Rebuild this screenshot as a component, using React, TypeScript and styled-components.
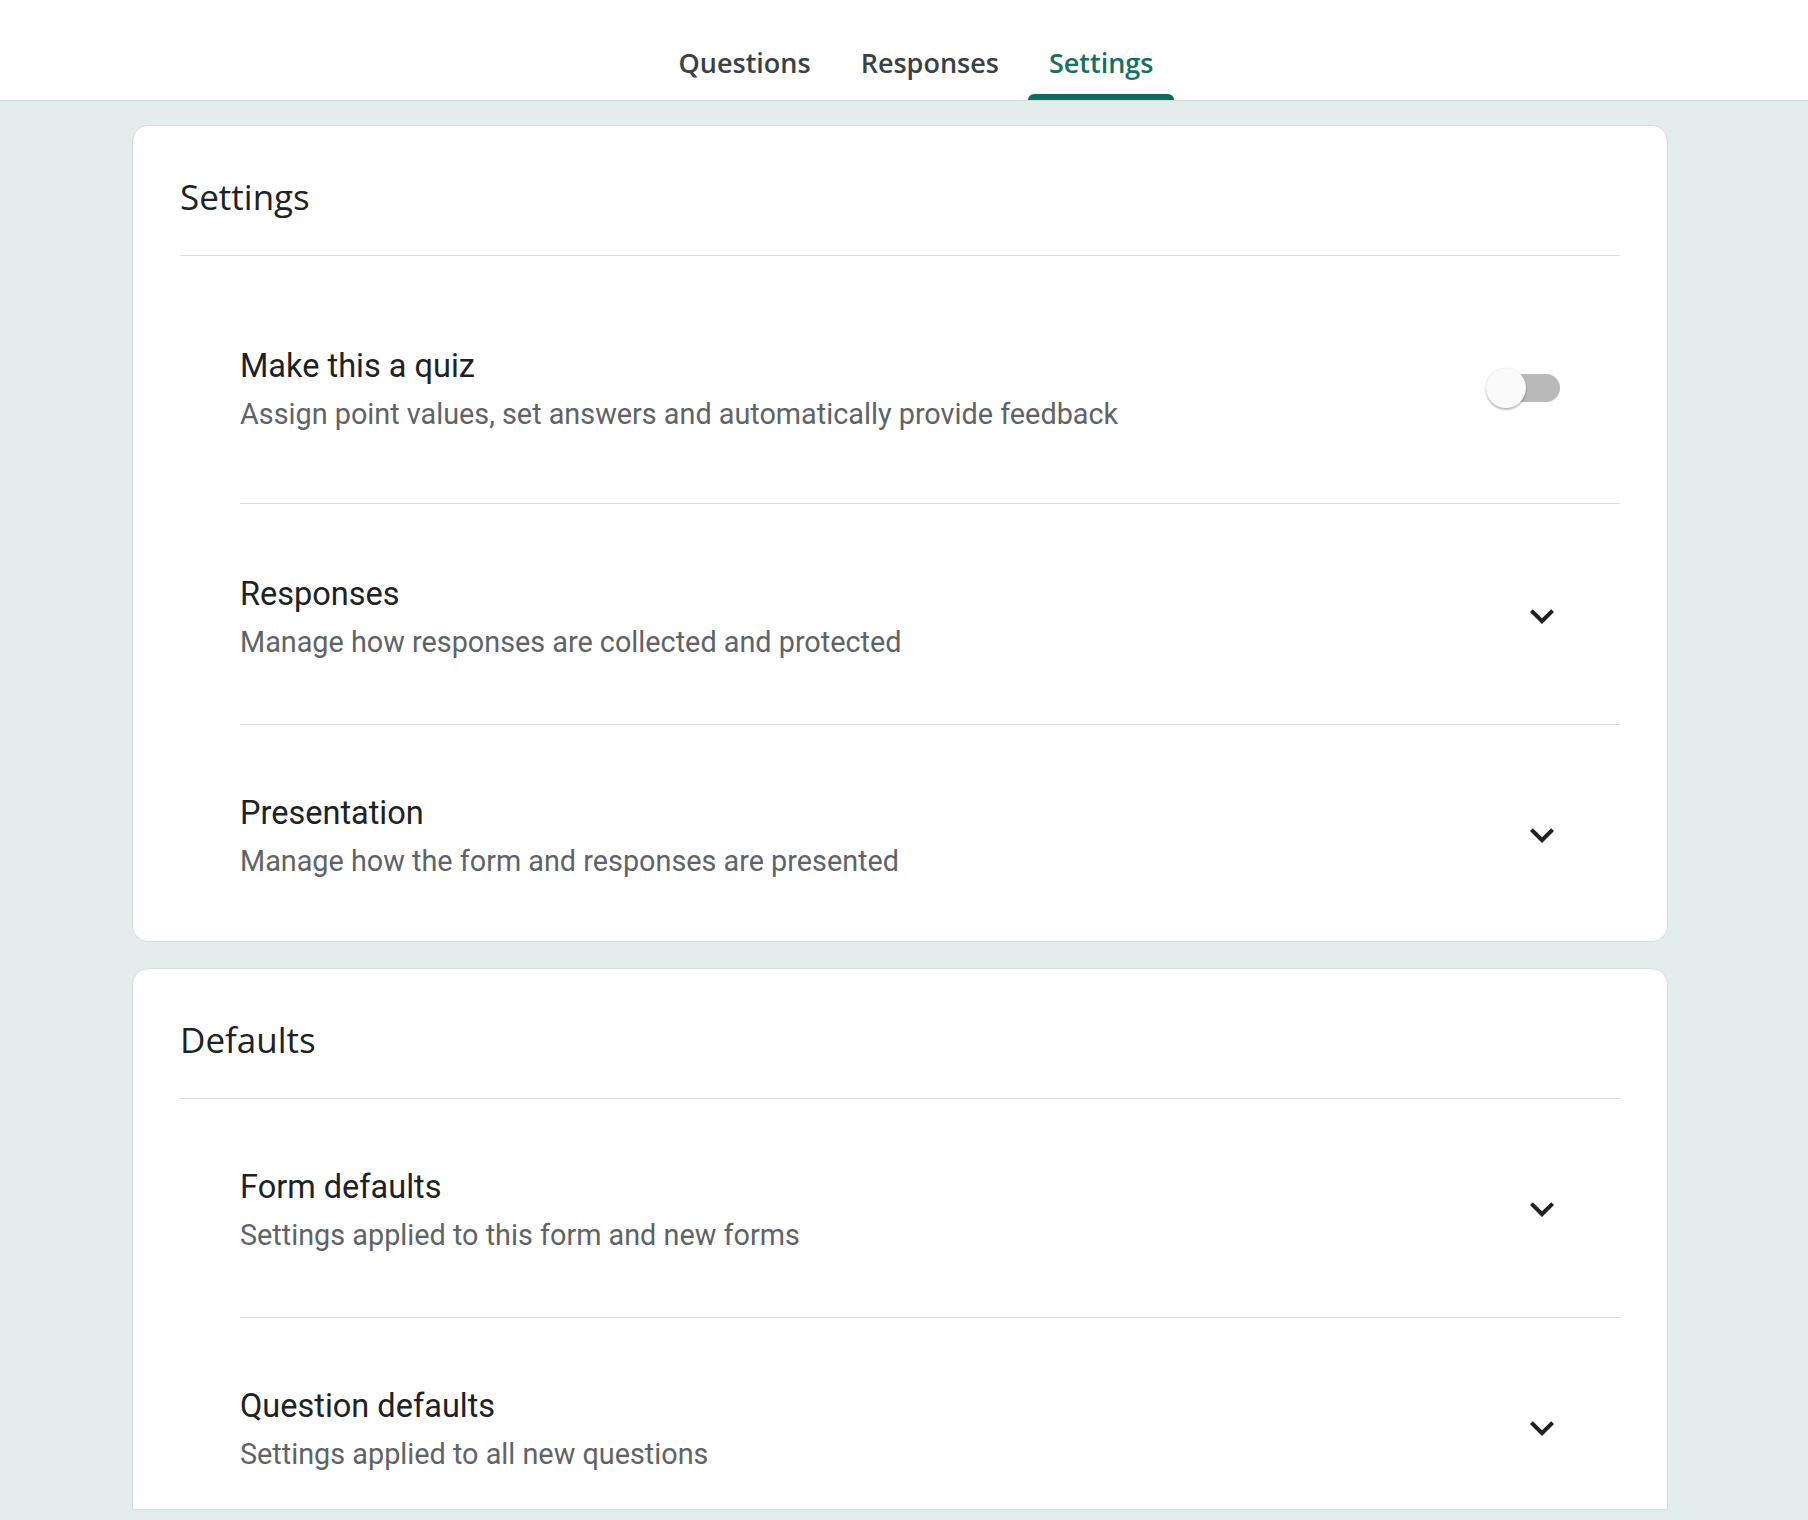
import React from "react";
import styled, { createGlobalStyle } from "styled-components";

const GlobalStyle = createGlobalStyle`
  html, body {
    margin: 0;
    padding: 0;
    background: #e3edeb;
  }
  body {
    font-family: Roboto, "Noto Sans", Arial, sans-serif;
    -webkit-font-smoothing: antialiased;
  }
  * { box-sizing: border-box; }
`;

const Page = styled.div`
  min-height: 1520px;
  background: #e3edeb;
  display: flex;
  flex-direction: column;
`;

const Header = styled.header`
  height: 101px;
  background: #ffffff;
  border-bottom: 1px solid #d6dbda;
  display: flex;
  justify-content: center;
  padding-left: 24px;
`;

const TabList = styled.nav`
  display: flex;
  align-items: stretch;
  height: 100px;
`;

const Tab = styled.div<{ $active?: boolean }>`
  position: relative;
  padding: 0 25px;
  display: flex;
  align-items: center;
  padding-top: 26px;
  font-family: "Open Sans", "Noto Sans", sans-serif;
  font-weight: 600;
  font-size: 27px;
  line-height: 40px;
  color: ${(p) => (p.$active ? "#16705f" : "#3c4043")};
  cursor: pointer;

  &::after {
    content: "";
    display: ${(p) => (p.$active ? "block" : "none")};
    position: absolute;
    left: 4px;
    right: 4px;
    bottom: 0;
    height: 6px;
    border-radius: 6px 6px 0 0;
    background: #0f6b5b;
  }
`;

const Main = styled.main`
  padding: 24px 140px 0 132px;
  display: flex;
  flex-direction: column;
  gap: 26px;
`;

const Card = styled.section<{ $cut?: boolean }>`
  background: #ffffff;
  border: 1px solid #dadce0;
  border-radius: ${(p) => (p.$cut ? "16px 16px 0 0" : "16px")};
  padding: 0 47px;
  display: flex;
  flex-direction: column;
`;

const CardTitle = styled.h2`
  margin: 0;
  padding: 47px 0 34px;
  border-bottom: 1px solid #dadce0;
  font-family: "Open Sans", "Noto Sans", sans-serif;
  font-weight: 400;
  font-size: 35px;
  line-height: 48px;
  color: #202124;
`;

const RowList = styled.div`
  margin-left: 60px;
  display: flex;
  flex-direction: column;
`;

const Row = styled.div<{ $pt: number; $pb: number; $last?: boolean }>`
  display: flex;
  align-items: center;
  padding: ${(p) => p.$pt}px 54px ${(p) => p.$pb}px 0;
  border-bottom: ${(p) => (p.$last ? "none" : "1px solid #dadce0")};
`;

const RowText = styled.div`
  flex: 1;
  display: flex;
  flex-direction: column;
`;

const RowTitle = styled.div`
  font-family: Roboto, Arial, sans-serif;
  font-size: 32.5px;
  line-height: 52px;
  color: #202124;
`;

const RowDesc = styled.div`
  font-family: Roboto, Arial, sans-serif;
  font-size: 28.8px;
  line-height: 44px;
  color: #5f6368;
`;

const Trailing = styled.div`
  width: 80px;
  display: flex;
  justify-content: flex-end;
  align-items: center;
`;

const Switch = styled.div`
  position: relative;
  width: 74px;
  height: 40px;
  margin-right: 6px;
  cursor: pointer;

  &::before {
    content: "";
    position: absolute;
    left: 6px;
    right: 0;
    top: 6px;
    height: 28px;
    border-radius: 14px;
    background: #b9b9b9;
  }
`;

const Thumb = styled.span`
  position: absolute;
  left: 0;
  top: 0;
  width: 40px;
  height: 40px;
  border-radius: 50%;
  background: #fafafa;
  box-shadow: 0 2px 2px rgba(0, 0, 0, 0.24), 0 0 2px rgba(0, 0, 0, 0.12);
`;

const ExpandButton = styled.div`
  width: 48px;
  height: 48px;
  display: flex;
  align-items: center;
  justify-content: center;
  color: #202124;
`;

const ExpandMore = () => (
  <svg width="48" height="48" viewBox="0 0 24 24" fill="currentColor" aria-hidden="true">
    <path d="M16.59 8.59L12 13.17 7.41 8.59 6 10l6 6 6-6z" />
  </svg>
);

type Item = {
  title: string;
  desc: string;
  kind: "switch" | "expand";
  pt: number;
  pb: number;
};

const settingsItems: Item[] = [
  {
    title: "Make this a quiz",
    desc: "Assign point values, set answers and automatically provide feedback",
    kind: "switch",
    pt: 84,
    pb: 67,
  },
  {
    title: "Responses",
    desc: "Manage how responses are collected and protected",
    kind: "expand",
    pt: 64,
    pb: 60,
  },
  {
    title: "Presentation",
    desc: "Manage how the form and responses are presented",
    kind: "expand",
    pt: 62,
    pb: 58,
  },
];

const defaultItems: Item[] = [
  {
    title: "Form defaults",
    desc: "Settings applied to this form and new forms",
    kind: "expand",
    pt: 62,
    pb: 60,
  },
  {
    title: "Question defaults",
    desc: "Settings applied to all new questions",
    kind: "expand",
    pt: 62,
    pb: 33,
  },
];

const SettingRow = ({ item, last }: { item: Item; last: boolean }) => (
  <Row $pt={item.pt} $pb={item.pb} $last={last}>
    <RowText>
      <RowTitle>{item.title}</RowTitle>
      <RowDesc>{item.desc}</RowDesc>
    </RowText>
    <Trailing>
      {item.kind === "switch" ? (
        <Switch role="switch" aria-checked="false">
          <Thumb />
        </Switch>
      ) : (
        <ExpandButton>
          <ExpandMore />
        </ExpandButton>
      )}
    </Trailing>
  </Row>
);

export default function App() {
  return (
    <Page>
      <GlobalStyle />
      <Header>
        <TabList>
          <Tab>Questions</Tab>
          <Tab>Responses</Tab>
          <Tab $active>Settings</Tab>
        </TabList>
      </Header>
      <Main>
        <Card>
          <CardTitle>Settings</CardTitle>
          <RowList>
            {settingsItems.map((it, i) => (
              <SettingRow key={it.title} item={it} last={i === settingsItems.length - 1} />
            ))}
          </RowList>
        </Card>
        <Card $cut>
          <CardTitle>Defaults</CardTitle>
          <RowList>
            {defaultItems.map((it, i) => (
              <SettingRow key={it.title} item={it} last={i === defaultItems.length - 1} />
            ))}
          </RowList>
        </Card>
      </Main>
    </Page>
  );
}
